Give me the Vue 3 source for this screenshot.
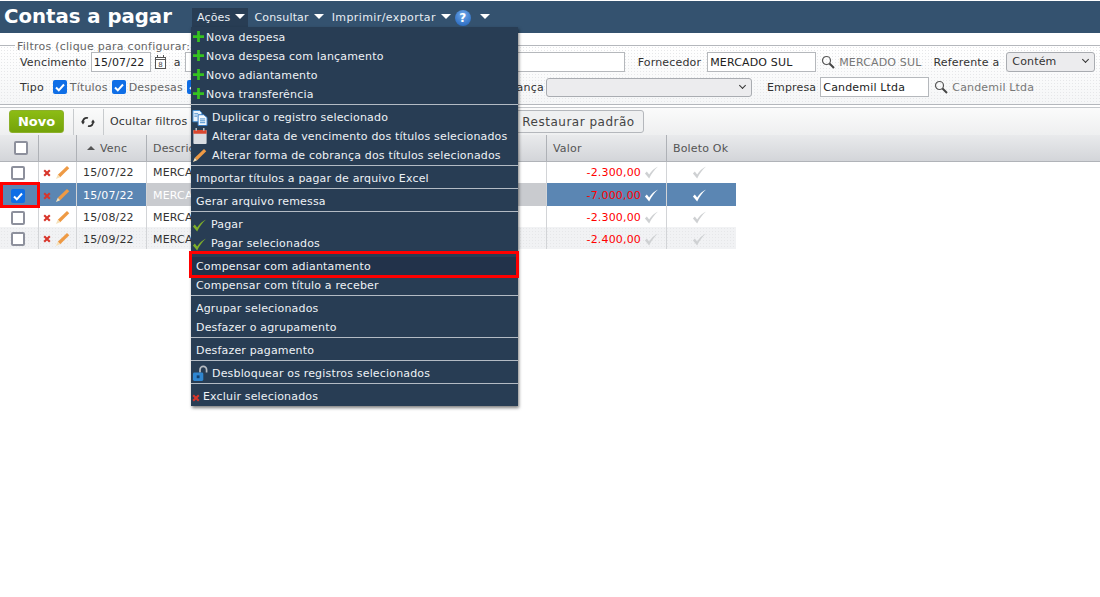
<script setup>
const nav = ["Ações", "Consultar", "Imprimir/exportar"];

const menu = [
  [
    { text: "Nova despesa", icon: "plus" },
    { text: "Nova despesa com lançamento", icon: "plus" },
    { text: "Novo adiantamento", icon: "plus" },
    { text: "Nova transferência", icon: "plus" },
  ],
  [
    { text: "Duplicar o registro selecionado", icon: "copy" },
    { text: "Alterar data de vencimento dos títulos selecionados", icon: "cal" },
    { text: "Alterar forma de cobrança dos títulos selecionados", icon: "pencil" },
  ],
  [{ text: "Importar títulos a pagar de arquivo Excel" }],
  [{ text: "Gerar arquivo remessa" }],
  [
    { text: "Pagar", icon: "check" },
    { text: "Pagar selecionados", icon: "check" },
  ],
  [
    { text: "Compensar com adiantamento", active: true },
    { text: "Compensar com título a receber" },
  ],
  [{ text: "Agrupar selecionados" }, { text: "Desfazer o agrupamento" }],
  [{ text: "Desfazer pagamento" }],
  [{ text: "Desbloquear os registros selecionados", icon: "lock" }],
  [{ text: "Excluir selecionados", icon: "x" }],
];

const rows = [
  { venc: "15/07/22", valor: "-2.300,00" },
  { venc: "15/07/22", valor: "-7.000,00", selected: true },
  { venc: "15/08/22", valor: "-2.300,00" },
  { venc: "15/09/22", valor: "-2.400,00" },
];
</script>

<template>
  <div class="page">
    <svg class="defs" width="0" height="0">
      <symbol id="plus" viewBox="0 0 12 12"><path d="M4.500 0h3v4.500H12v3H7.500V12h-3V7.500H0v-3h4.500z" fill="#35c21f" /></symbol>
      <symbol id="x" viewBox="0 0 10 10"><path d="M1.500 1.500l7 7M8.500 1.500l-7 7" stroke="#d8352a" stroke-width="2.600" /></symbol>
      <symbol id="check" viewBox="0 0 16 16"><path d="M1 9l2-2 2.500 3C8 6 11 3.500 15 1.500 11 5 8 9 5.500 14.500z" fill="#7fae2a" /></symbol>
      <symbol id="tick" viewBox="0 0 16 16"><path d="M1 9l2-2 2.500 3C8 6 11 3.500 15 1.500 11 5 8 9 5.500 14.500z" fill="currentColor" /></symbol>
      <symbol id="pencil" viewBox="0 0 16 16">
        <path d="M3 10.500L12.800 1l2.400 2.400L5.500 13z" fill="#ee9a45" />
        <path d="M1 15l2-4.500L5.500 13z" fill="#f5e0b8" />
      </symbol>
      <symbol id="cal" viewBox="0 0 16 18">
        <rect x="1" y="2" width="14" height="15" rx="1" fill="#d9dde2" />
        <path d="M1 3a1 1 0 0 1 1-1h12a1 1 0 0 1 1 1v3H1z" fill="#d9472f" />
        <path d="M4 0v3M12 0v3" stroke="#b9c0c8" stroke-width="1.600" />
      </symbol>
      <symbol id="copy" viewBox="0 0 17 17">
        <path d="M1 .5h7l2.500 2.500v9.500H1z" fill="#e8f1fa" stroke="#3d87cc" />
        <path d="M6.500 5h6l3.500 3v8.500H6.500z" fill="#f3f8fd" stroke="#2f78c4" />
        <path d="M2.500 4h4M2.500 6.500h3M8.500 9.500h5.500M8.500 11.500h5.500M8.500 13.500h5.500" stroke="#3d87cc" />
      </symbol>
      <symbol id="lock" viewBox="0 0 17 18">
        <path d="M8.500 8V5a3.500 3.500 0 0 1 7 0v3" fill="none" stroke="#b7bcc2" stroke-width="1.800" />
        <rect x="1" y="8" width="11" height="9" rx="1.500" fill="#2f86d0" />
        <rect x="5" y="11" width="3" height="3" fill="#123f6e" />
      </symbol>
      <symbol id="search" viewBox="0 0 14 14">
        <circle cx="5.500" cy="5.500" r="4" fill="none" stroke="#555" stroke-width="1.200" />
        <path d="M8.500 8.500l4.500 4.500" stroke="#444" stroke-width="2" />
      </symbol>
    </svg>

    <header class="topbar">
      <h1>Contas a pagar</h1>
      <nav class="nav">
        <a v-for="(n, i) in nav" :key="n" class="nav-item" :class="{ open: i === 0 }">
          {{ n }}<i class="arrow"></i>
        </a>
        <span class="help">?</span>
        <i class="arrow last"></i>
      </nav>
    </header>

    <fieldset class="filters">
      <legend>Filtros (clique para configurar:</legend>
      <div class="filter-row first">
        <label class="lbl">Vencimento</label>
        <input class="field date" value="15/07/22" />
        <svg class="small-cal" viewBox="0 0 13 14" width="13" height="14">
          <rect x="1.500" y="2.500" width="10" height="11" fill="#fff" stroke="#555" />
          <path d="M1 4.500h11M3.500 0v3M9.500 0v3" stroke="#555" />
          <text x="6.500" y="12" font-size="7" text-anchor="middle" fill="#444">8</text>
        </svg>
        <span class="lbl a">a</span>
        <input class="field date-to" />
        <label class="lbl forn">Fornecedor</label>
        <input class="field pick" value="MERCADO SUL" />
        <svg class="mag"><use href="#search" /></svg>
        <span class="picked">MERCADO SUL</span>
        <label class="lbl ref">Referente a</label>
        <div class="select contem">Contém<i class="chev"></i></div>
      </div>
      <div class="filter-row second">
        <label class="lbl">Tipo</label>
        <span class="box on tipo"><svg viewBox="0 0 14 14"><path d="M3 7.500l2.800 2.800L11 4.500" /></svg></span>
        <span class="opt">Títulos</span>
        <span class="box on"><svg viewBox="0 0 14 14"><path d="M3 7.500l2.800 2.800L11 4.500" /></svg></span>
        <span class="opt">Despesas</span>
        <span class="box on"><svg viewBox="0 0 14 14"><path d="M3 7.500l2.800 2.800L11 4.500" /></svg></span>
        <label class="lbl cobranca">Forma de cobrança</label>
        <div class="select forma"><i class="chev"></i></div>
        <label class="lbl emp">Empresa</label>
        <input class="field pick" value="Candemil Ltda" />
        <svg class="mag"><use href="#search" /></svg>
        <span class="picked">Candemil Ltda</span>
      </div>
    </fieldset>

    <div class="toolbar">
      <button class="novo">Novo</button>
      <span class="tool-sep"></span>
      <svg class="refresh" viewBox="0 0 14 12" width="14" height="12">
        <path d="M2 7a4 4 0 0 1 5-5M12 5a4 4 0 0 1-5 5" fill="none" stroke="#333" stroke-width="1.800" />
        <path d="M0 5.500l2 3 2-3zM10 6.500l2-3 2 3z" fill="#333" />
      </svg>
      <span class="tool-sep"></span>
      <span class="tool-text">Ocultar filtros</span>
      <button class="restore">Restaurar padrão</button>
    </div>

    <div class="grid-head">
      <div class="hc"><span class="box head-box"></span></div>
      <div class="hc"></div>
      <div class="hc venc"><i class="up"></i>Venc</div>
      <div class="hc desc">Descrição</div>
      <div class="hc valor">Valor</div>
      <div class="hc boleto">Boleto Ok</div>
    </div>

    <div v-for="(r, i) in rows" :key="i" class="row" :class="{ sel: r.selected }">
      <div class="c"><span class="box" :class="{ on: r.selected }"><svg v-if="r.selected" viewBox="0 0 14 14"><path d="M3 7.500l2.800 2.800L11 4.500" /></svg></span></div>
      <div class="c acts">
        <svg class="act-x"><use href="#x" /></svg>
        <svg class="act-p"><use href="#pencil" /></svg>
      </div>
      <div class="c date-c">{{ r.venc }}</div>
      <div class="c desc-c">MERCADO SUL</div>
      <div class="c val-c">{{ r.valor }}<svg class="tick"><use href="#tick" /></svg></div>
      <div class="c ok-c"><svg class="tick"><use href="#tick" /></svg></div>
    </div>

    <div class="mark row-mark"></div>

    <div class="menu">
      <template v-for="(group, g) in menu" :key="g">
        <div v-if="g > 0" class="sep"></div>
        <div v-for="item in group" :key="item.text" class="item" :class="{ active: item.active }">
          <svg v-if="item.icon" :class="'ic-' + item.icon"><use :href="'#' + item.icon" /></svg>
          <span>{{ item.text }}</span>
        </div>
      </template>
      <div class="mark item-mark"></div>
    </div>
  </div>
</template>

<style>
html, body { background: #fff; }
</style>

<style scoped>
.page {
  position: relative;
  width: 1100px;
  height: 597px;
  overflow: hidden;
  font-family: "DejaVu Sans", Verdana, sans-serif;
  font-size: 11px;
  letter-spacing: 0.17px;
  color: #333;
  background: #fff;
}
.defs { position: absolute; }

.topbar {
  display: flex;
  align-items: flex-start;
  height: 32px;
  margin-top: 1px;
  background: #34526f;
}
h1 {
  margin: 0 0 0 4px;
  width: 187px;
  font-size: 19.700px;
  letter-spacing: 0;
  line-height: 32px;
  color: #fff;
  white-space: nowrap;
}
.nav {
  display: flex;
  align-items: center;
  height: 19px;
  margin: 7px 0 0 1px;
  color: #e8eef4;
}
.nav-item {
  display: flex;
  align-items: center;
  height: 19px;
  padding: 0 3px 0 5px;
}
.nav-item:nth-child(3) { letter-spacing: 0.4px; }
.nav-item.open { background: #283d54; margin-right: 1px; }
.arrow {
  width: 0;
  height: 0;
  margin: 0 0 3px 5px;
  border: 5px solid transparent;
  border-bottom: 0;
  border-top-color: #fff;
}
.arrow.last { margin-left: 9px; }
.help {
  width: 16px;
  height: 16px;
  margin-left: 1px;
  border-radius: 50%;
  background: radial-gradient(circle at 50% 30%, #6fa8ea, #1d5fb8);
  color: #fff;
  font-weight: bold;
  font-size: 12px;
  line-height: 16px;
  text-align: center;
}

.filters {
  margin: 4px 0 0;
  padding: 0;
  height: 66px;
  min-width: 0;
  border: 0;
  border-top: 1px solid #b4b7bc;
  border-bottom: 1px solid #b4b7bc;
  background: radial-gradient(#e6e7e9 0.5px, transparent 0.7px) 0 0 / 3px 3px, linear-gradient(#fff, #f5f6f7);
}
legend {
  margin-left: 15px;
  padding: 3px 2px 0;
  line-height: 13px;
  letter-spacing: 0.25px;
  color: #666;
  white-space: nowrap;
}
.filter-row { display: flex; align-items: center; padding-left: 20px; }
.filter-row.first { height: 20px; margin-top: -1px; }
.filter-row.second { height: 20px; margin-top: 5px; }
.lbl { white-space: nowrap; }
.field {
  box-sizing: border-box;
  height: 20px;
  padding: 0 2px;
  border: 1px solid #b5b8bc;
  background: #fff;
  font: inherit;
  letter-spacing: inherit;
  color: #222;
  outline: none;
}
.date { width: 60px; margin-left: 4px; }
.small-cal { margin-left: 3px; }
.a { margin-left: 7px; }
.date-to { width: 440px; margin-left: 4px; }
.forn { margin-left: 13px; }
.pick { width: 109px; margin-left: 4px; }
.first .pick { margin-left: 6px; }
.mag { width: 14px; height: 14px; margin-left: 5px; }
.picked { margin-left: 4px; color: #777; white-space: nowrap; }
.ref { margin-left: 12px; }
.select {
  position: relative;
  box-sizing: border-box;
  height: 20px;
  padding-left: 5px;
  border: 1px solid #a9acb1;
  border-radius: 3px;
  background: #ececee;
  line-height: 17px;
}
.contem { width: 89px; margin-left: 7px; }
.forma { width: 206px; margin-left: 5px; height: 19px; }
.chev {
  position: absolute;
  right: 6px;
  top: 4px;
  width: 4px;
  height: 4px;
  border-right: 1.500px solid #333;
  border-bottom: 1.500px solid #333;
  transform: rotate(45deg);
}
.tipo { margin-left: 9px; }
.opt { margin: 0 4px 0 3px; color: #666; }
.cobranca { margin-left: 234px; width: 106px; }
.emp { margin-left: 15px; }

.box {
  display: inline-block;
  box-sizing: border-box;
  flex: none;
  width: 14px;
  height: 14px;
  border: 2px solid #8d909c;
  border-radius: 2px;
  background: #fff;
}
.box.on { border: 0; background: #0f6ee6; }
.box svg { display: block; width: 14px; height: 14px; }
.box path { fill: none; stroke: #fff; stroke-width: 2; }

.toolbar {
  display: flex;
  align-items: center;
  box-sizing: border-box;
  height: 28px;
  margin-top: 2px;
  padding-left: 9px;
  border-top: 1px solid #c5c8cc;
  background: linear-gradient(#fbfbfb, #eeeff0);
}
.novo {
  width: 55px;
  height: 23px;
  padding: 0;
  border: 1px solid #8cb02a;
  border-radius: 3px;
  background: linear-gradient(#8cbc14, #74a30a);
  color: #fff;
  font: bold 13px "DejaVu Sans", Verdana, sans-serif;
}
.tool-sep { width: 1px; height: 26px; margin-left: 9px; background: #c8cbce; }
.refresh { margin-left: 7px; margin-right: -1px; }
.tool-text { margin-left: 6px; white-space: nowrap; width: 100px; }
.restore {
  box-sizing: border-box;
  width: 131px;
  height: 23px;
  margin-left: 303px;
  padding: 0;
  border: 1px solid #b4b7bc;
  border-radius: 3px;
  background: #eff0f1;
  color: #444;
  font: 12px "DejaVu Sans", Verdana, sans-serif;
  letter-spacing: 0.5px;
}

.grid-head, .row {
  display: grid;
  grid-template-columns: 39px 38px 70px 400px 120px 69px;
}
.grid-head {
  height: 27px;
  border-bottom: 1px solid #b0b3b8;
  box-sizing: border-box;
  background: linear-gradient(#e9eaec, #d3d5d9);
}
.hc {
  display: flex;
  align-items: center;
  padding-left: 6px;
  border-right: 1px solid #aeb1b6;
  color: #555;
  white-space: nowrap;
}
.hc:first-child { padding-left: 0; }
.head-box { margin-left: 14px; }
.hc.venc { padding-left: 10px; }
.hc.boleto { border-right: 0; }
.up {
  width: 0;
  height: 0;
  margin-right: 5px;
  border: 4px solid transparent;
  border-top: 0;
  border-bottom-color: #555;
}

.row { height: 21px; width: 736px; }
.row.sel { height: 23px; background: #5b86b3; color: #fff; }
.sel + .row { height: 21px; }
.sel + .row + .row { height: 22px; background: radial-gradient(#e6e7e9 0.5px, transparent 0.7px) 0 0 / 3px 3px, #f1f2f4; }
.c {
  display: flex;
  align-items: center;
  box-sizing: border-box;
  min-width: 0;
  border-right: 1px solid #d2d4d7;
  white-space: nowrap;
  overflow: hidden;
}
.sel .c, .sel ~ .row .c { padding-top: 2px; }
.c:first-child { padding-left: 11px; }
.c:last-child { border-right: 0; }
.acts { padding-left: 4px; }
.act-x { width: 8px; height: 8px; }
.act-p { width: 15px; height: 15px; margin-left: 4px; }
.date-c { padding-left: 6px; }
.desc-c { padding-left: 6px; }
.sel .desc-c { background: #c9cbcf; }
.val-c { justify-content: flex-end; padding-right: 7px; color: #f00; }
.ok-c { padding-left: 22px; }
.tick { width: 15px; height: 15px; margin-left: 3px; color: #cfd1d3; }
.sel .tick { color: #fff; }

.menu {
  position: absolute;
  left: 191px;
  top: 27px;
  box-sizing: border-box;
  width: 327px;
  height: 378.500px;
  padding-top: 1px;
  background: #283d54;
  box-shadow: 1px 2px 3px rgba(0, 0, 0, 0.5);
  color: #eef2f6;
}
.item {
  display: flex;
  align-items: center;
  height: 19px;
  padding-left: 5px;
  white-space: nowrap;
}
.item:has(svg) { padding-left: 1px; }
.item.active { background: #22324a; }
.sep { height: 1px; margin: 0 0 3px; background: #b3bbc4; }
.item svg { flex: none; }
.ic-plus { width: 11px; height: 11px; margin: 0 2px 2px 1px; }
.ic-copy { width: 16px; height: 16px; margin-right: 4px; }
.ic-cal { width: 16px; height: 17px; margin-right: 4px; }
.ic-pencil { width: 15px; height: 15px; margin-right: 5px; }
.ic-check { width: 15px; height: 15px; margin: 1px 4px 0 0; }
.ic-lock { width: 16px; height: 17px; margin-right: 4px; }
.ic-x { width: 8px; height: 8px; margin: 3px 3px 0 0; }

.mark { position: absolute; box-sizing: border-box; border: 3px solid #f00; }
.row-mark { left: 0; top: 182px; width: 40px; height: 26px; }
.item-mark { left: -2px; top: 224px; width: 330px; height: 27px; }
</style>
